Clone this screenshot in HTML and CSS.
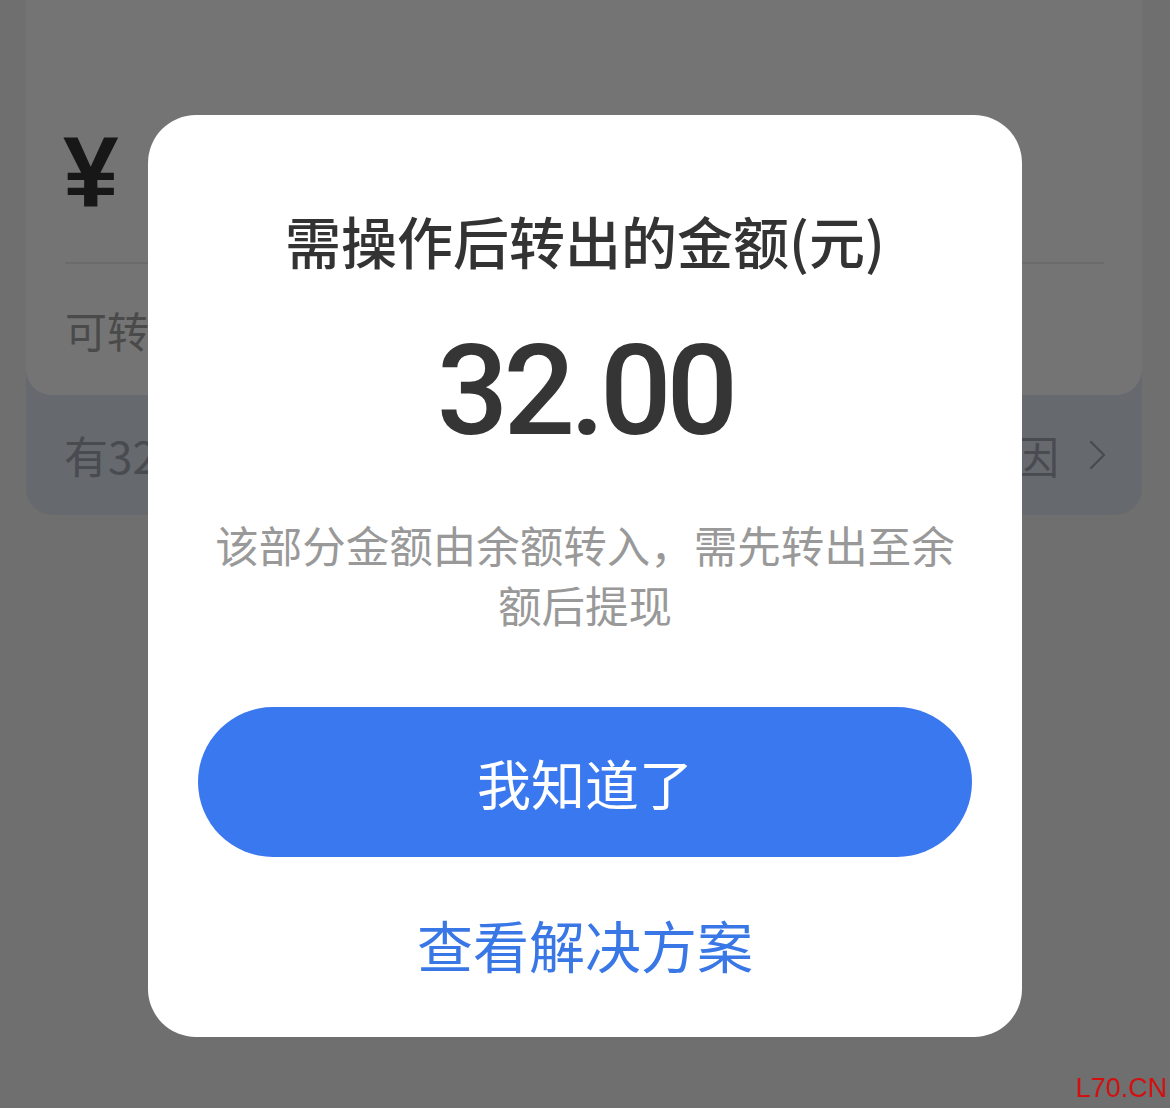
FILE: index.html
```html
<!DOCTYPE html>
<html lang="zh-CN">
<head>
<meta charset="utf-8">
<title>提现</title>
<link rel="stylesheet" href="styles.css">
</head>
<body>
  <main class="page">
    <section class="balance">
      <div class="card">
        <div class="amount-row"><span class="yen">¥</span></div>
        <div class="divider"></div>
        <div class="avail">可转出金额</div>
      </div>
      <div class="notice-row">
        <span class="notice-text">有32.00元</span>
        <span class="reason">查看原因
          <svg class="chevron" width="20" height="32" viewBox="0 0 20 32" aria-hidden="true">
            <path d="M4 3 L17 16 L4 29" fill="none" stroke="currentColor" stroke-width="2.4" stroke-linecap="round" stroke-linejoin="round"/>
          </svg>
        </span>
      </div>
    </section>
  </main>

  <div class="overlay">
    <div class="dialog" role="dialog">
      <h2 class="dialog-title">需操作后转出的金额(元)</h2>
      <div class="dialog-amount">32.00</div>
      <p class="dialog-desc">该部分金额由余额转入，需先转出至余额后提现</p>
      <button class="btn-primary" type="button">我知道了</button>
      <a class="dialog-link" href="#">查看解决方案</a>
    </div>
  </div>

  <div class="watermark">L70.CN</div>
</body>
</html>
```

FILE: styles.css
```css
* {
  box-sizing: border-box;
}

html, body {
  margin: 0;
  padding: 0;
}

body {
  width: 1170px;
  height: 1108px;
  overflow: hidden;
  background: #f4f4f4;
  font-family: "Noto Sans CJK SC", "Noto Sans", sans-serif;
  position: relative;
}

.page {
  padding: 0 28px 0 26px;
}

.balance {
  background: #e0e7f0;
  border-radius: 0 0 26px 26px;
}

.card {
  background: #ffffff;
  border-radius: 0 0 26px 26px;
  padding: 122px 38px 35px 39px;
}

.amount-row {
  height: 100px;
}

.yen {
  font-family: "Liberation Sans", Arial, sans-serif;
  font-weight: 700;
  font-size: 100px;
  line-height: 100px;
  color: #333333;
  margin-left: -2px;
}

.divider {
  margin-top: 40px;
  height: 2px;
  background: #ebebeb;
}

.avail {
  margin-top: 36px;
  font-size: 42px;
  line-height: 60px;
  color: #a3a3a3;
  white-space: nowrap;
}

.notice-row {
  display: flex;
  justify-content: space-between;
  align-items: center;
  padding: 30px 35px 30px 38px;
  font-size: 44px;
  line-height: 60px;
  color: #9ea5b0;
  white-space: nowrap;
}

.reason {
  display: flex;
  align-items: center;
  gap: 28px;
}

.chevron {
  color: #9ea5b0;
  display: block;
}

.overlay {
  position: fixed;
  inset: 0;
  background: rgba(0, 0, 0, 0.545);
  display: flex;
  justify-content: center;
  align-items: flex-start;
  padding-top: 115px;
}

.dialog {
  width: 874px;
  background: #ffffff;
  border-radius: 48px;
  padding: 90px 50px 58px;
  display: flex;
  flex-direction: column;
  align-items: stretch;
  text-align: center;
}

.dialog-title {
  margin: 0;
  font-size: 56px;
  line-height: 70px;
  font-weight: 500;
  color: #333333;
}

.dialog-amount {
  margin-top: 54px;
  font-family: Roboto, "Liberation Sans", sans-serif;
  font-weight: 500;
  font-size: 126px;
  line-height: 124px;
  letter-spacing: -5px;
  color: #353535;
}

.dialog-desc {
  margin: 62px 0 0;
  padding: 0 10px;
  font-size: 43.5px;
  line-height: 60px;
  color: #999999;
}

.btn-primary {
  margin-top: 72px;
  height: 150px;
  border: none;
  border-radius: 75px;
  background: #3a78f0;
  color: #ffffff;
  font-family: inherit;
  font-size: 54px;
  font-weight: 400;
  cursor: pointer;
}

.dialog-link {
  margin-top: 52px;
  font-size: 56px;
  line-height: 70px;
  color: #3a77e6;
  text-decoration: none;
}

.watermark {
  position: absolute;
  right: 3px;
  bottom: 6px;
  font-family: "Liberation Sans", Arial, sans-serif;
  font-size: 27px;
  line-height: 27px;
  color: #d40f0f;
}
```
